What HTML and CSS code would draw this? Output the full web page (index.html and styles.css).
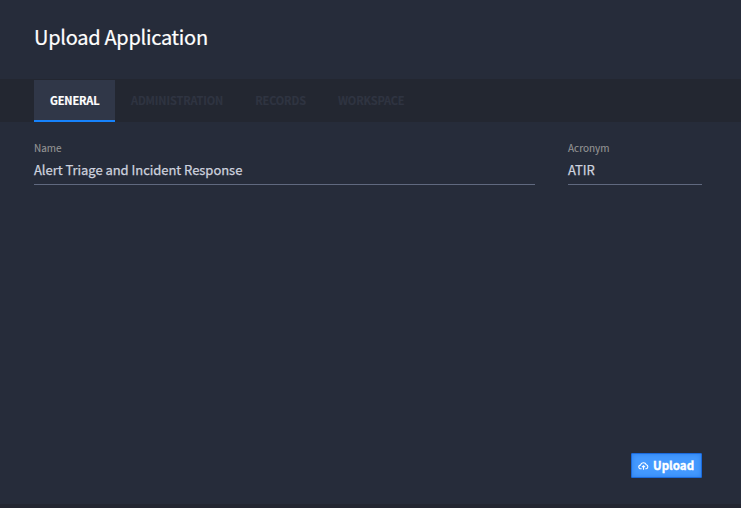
FILE: index.html
```html
<!DOCTYPE html>
<html lang="en">
<head>
<meta charset="utf-8">
<title>Upload Application</title>
<link rel="stylesheet" href="styles.css">
</head>
<body>
<main class="dialog">
  <header class="header"><h1 class="title">Upload Application</h1></header>
  <nav class="tabs">
    <span class="tab tab-active">GENERAL</span>
    <span class="tab">ADMINISTRATION</span>
    <span class="tab">RECORDS</span>
    <span class="tab">WORKSPACE</span>
  </nav>
  <section class="fields">
    <label class="field"><span class="label">Name</span><span class="value">Alert Triage and Incident Response</span></label>
    <label class="field"><span class="label">Acronym</span><span class="value">ATIR</span></label>
  </section>
  <footer class="footer">
    <button class="upload" type="button">
      <svg class="icon" viewBox="0 0 12 10" fill="none" stroke="currentColor" stroke-width="1.2">
        <path d="M4 8H3a2 2 0 0 1-.3-4A3.3 3.3 0 0 1 9 3.7 2.2 2.2 0 0 1 9 8H8"/>
        <path d="M6 9V5M4.3 6.3 6 4.7l1.7 1.6"/>
      </svg>
      <span class="upload-text">Upload</span>
    </button>
  </footer>
</main>
</body>
</html>
```

FILE: styles.css
```css
* { box-sizing: border-box; }
body {
  margin: 0;
  height: 508px;
  background: #232631;
  font-family: "Noto Sans CJK SC", "Open Sans", sans-serif;
  overflow: hidden;
}
.dialog {
  display: flex;
  flex-direction: column;
  height: 504px;
  background: #262c3a;
}
.header { height: 79px; padding: 22px 34px 0; }
.title {
  margin: 0;
  color: #fff;
  font-size: 20px;
  font-weight: 400;
  line-height: 30px;
  letter-spacing: -0.28px;
  -webkit-text-stroke: 0.2px currentColor;
}
.tabs {
  display: flex;
  height: 43px;
  padding: 1px 34px 0;
  background: #232731;
}
.tab {
  height: 42px;
  padding: 0 16px;
  color: #2f3441;
  font-size: 11px;
  font-weight: 700;
  line-height: 40px;
  letter-spacing: -0.14px;
  -webkit-text-stroke: 0.2px currentColor;
}
.tab-active {
  width: 81px;
  color: #fff;
  background: #303748;
  border-bottom: 2px solid #1682fb;
}
.fields {
  display: grid;
  grid-template-columns: 501px 134px;
  column-gap: 33px;
  padding: 19px 34px 0;
}
.field { display: flex; flex-direction: column; }
.label {
  height: 15px;
  color: #959595;
  font-size: 10px;
  line-height: 14px;
  -webkit-text-stroke: 0.1px currentColor;
}
.value {
  height: 29px;
  padding-top: 4px;
  border-bottom: 1px solid #60697f;
  color: #ced2df;
  font-size: 13px;
  line-height: 20px;
  letter-spacing: -0.04px;
  -webkit-text-stroke: 0.25px currentColor;
}
.footer {
  display: flex;
  justify-content: flex-end;
  margin-top: auto;
  padding: 0 39px 26px 0;
}
.upload {
  display: flex;
  align-items: center;
  gap: 4px;
  width: 71px;
  height: 25px;
  padding: 0 0 0 6px;
  border: 1px solid #1b6bdc;
  border-radius: 1px;
  color: #fff;
  background: #4499fe;
  box-shadow: inset 0 0 5px #2c80ed;
  font: 700 11.5px/22px "Noto Sans CJK SC", "Open Sans", sans-serif;
}
.upload-text {
  margin-top: -2px;
  letter-spacing: 0.05px;
  -webkit-text-stroke: 0.35px currentColor;
}
.icon { width: 11px; height: 10px; flex: none; margin-top: 1px; }
```
